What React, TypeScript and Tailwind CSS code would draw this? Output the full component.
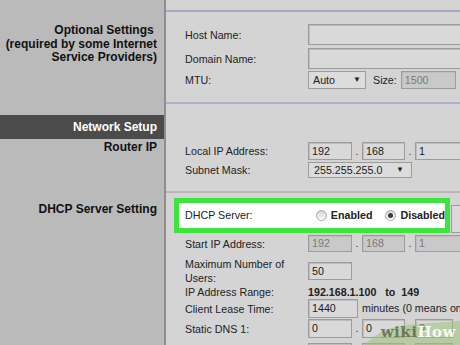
import React from 'react'

const font = { fontFamily: '"Liberation Sans", Arial, sans-serif' }

function Box({ w, h, v, dis, grow }: { w: number | string; h: number; v?: string; dis?: boolean; grow?: boolean }) {
  return (
    <div
      className={
        'flex items-center pl-[3px] border border-[#9c9c9c] shadow-[inset_1px_1px_0_#bdbdbd] ' +
        (dis ? 'bg-[#c9c9c9] text-[#7a7a7a] ' : 'bg-[#d9d9d9] text-[#1a1a1a] ') +
        (grow ? 'flex-1' : '')
      }
      style={{ width: grow ? undefined : w, height: h }}
    >
      {v}
    </div>
  )
}

function Dot() {
  return <span className="w-[10px] text-center text-[#444]">.</span>
}

function Radio({ on }: { on?: boolean }) {
  return (
    <span className="w-[11px] h-[11px] rounded-full border border-[#a8a8a8] bg-gradient-to-b from-[#d6d6d6] to-[#fbfbfb] flex items-center justify-center">
      {on && <span className="w-[5px] h-[5px] rounded-full bg-[#3a3a3a]" />}
    </span>
  )
}

function Row({ label, children, h, mt }: { label: React.ReactNode; children?: React.ReactNode; h: number; mt: number }) {
  return (
    <div className="flex items-center pl-[19px]" style={{ height: h, marginTop: mt }}>
      <div className="w-[123px] shrink-0 leading-[14px]">{label}</div>
      <div className="flex items-center flex-1 h-full">{children}</div>
    </div>
  )
}

export default function App() {
  return (
    <div className="relative w-[460px] h-[345px] overflow-hidden flex text-[10.7px] text-[#222]" style={font}>
      {/* sidebar */}
      <div className="w-[166px] shrink-0 bg-[#bababa] border-r-2 border-[#8e8e8e] font-bold text-[12px] text-right text-[#111]">
        <div className="pr-[7px] pt-[24px] leading-[13.5px]">
          <div>Optional Settings{'\u00a0'}</div>
          <div>(required by some Internet</div>
          <div>Service Providers)</div>
        </div>
        <div className="mt-[50px] h-[24px] bg-[#4b4b4b] text-white pr-[7px] flex items-center justify-end">
          Network Setup
        </div>
        <div className="pr-[7px] h-[16px] leading-[16px]">Router IP</div>
        <div className="pr-[7px] mt-[46px] leading-[16px]">DHCP Server Setting</div>
      </div>

      {/* content */}
      <div className="flex-1 bg-[#d4d4d4]">
        <div className="mt-[10px] h-[2px] bg-[#a9a6c6]" />
        <Row label="Host Name:" h={21} mt={12}>
          <Box w={0} h={21} grow />
        </Row>
        <Row label="Domain Name:" h={21} mt={3}>
          <Box w={0} h={21} grow />
        </Row>
        <Row label="MTU:" h={18} mt={2}>
          <div className="w-[58px] h-[18px] border border-[#9c9c9c] bg-[#dcdcdc] flex items-center justify-between px-[4px]">
            <span>Auto</span>
            <span className="text-[8px]">▼</span>
          </div>
          <span className="ml-[7px] mr-[4px]">Size:</span>
          <Box w={55} h={18} v="1500" dis />
        </Row>
        <div className="mt-[13px] h-[2px] bg-[#b2afc8]" />

        <Row label="Local IP Address:" h={18} mt={38}>
          <Box w={44} h={18} v="192" />
          <Dot />
          <Box w={43} h={18} v="168" />
          <Dot />
          <Box w={0} h={18} v="1" grow />
        </Row>
        <Row label="Subnet Mask:" h={16} mt={2}>
          <div className="w-[104px] h-[16px] border border-[#9c9c9c] bg-[#dcdcdc] flex items-center justify-between px-[5px]">
            <span>255.255.255.0</span>
            <span className="text-[8px] mr-[2px]">▼</span>
          </div>
        </Row>
        <div className="mt-[13px] h-[2px] bg-[#b8b8b8]" />

        <div className="flex items-center mt-[5px]">
          <div className="ml-[8px] w-[276px] h-[35px] border-[5px] border-[#3de43d] bg-white flex items-center pl-[6px]">
            <span className="w-[135px]">DHCP Server:</span>
            <Radio />
            <span className="ml-[4px] font-bold">Enabled</span>
            <span className="ml-[13px]"><Radio on /></span>
            <span className="ml-[4px] font-bold">Disabled</span>
          </div>
          <div className="ml-[1px] mt-[7px] w-[10px] h-[28px] border border-[#9c9c9c] bg-[#dadada]" />
        </div>

        <Row label="Start IP Address:" h={17} mt={2}>
          <Box w={44} h={17} v="192" dis />
          <Dot />
          <Box w={43} h={17} v="168" dis />
          <Dot />
          <Box w={0} h={17} v="1" dis grow />
        </Row>
        <Row label={<>Maximum Number of<br />Users:</>} h={30} mt={4}>
          <Box w={44} h={18} v="50" />
        </Row>
        <Row label="IP Address Range:" h={12} mt={0}>
          <span className="font-bold">192.168.1.100&nbsp;&nbsp;&nbsp;to&nbsp;&nbsp;149</span>
        </Row>
        <Row label="Client Lease Time:" h={19} mt={1}>
          <Box w={50} h={19} v="1440" />
          <span className="ml-[4px] whitespace-nowrap">minutes (0 means one day)</span>
        </Row>
        <Row label="Static DNS 1:" h={19} mt={1}>
          <Box w={44} h={19} v="0" />
          <Dot />
          <Box w={43} h={19} v="0" />
          <Dot />
          <Box w={38} h={19} v="0" />
        </Row>
        <Row label="Static DNS 2:" h={19} mt={5}>
          <Box w={44} h={19} v="0" />
          <Dot />
          <Box w={43} h={19} v="0" />
          <Dot />
          <Box w={38} h={19} v="0" />
        </Row>
      </div>

      {/* wikiHow watermark */}
      <svg className="absolute right-0 bottom-0" width="95" height="26" viewBox="0 0 95 26">
        <path d="M0 26 C 10 14, 25 7, 50 5 L 95 2 L 95 26 Z" fill="#9fc27a" fillOpacity="0.55" />
      </svg>
      <div
        className="absolute right-[4px] bottom-[5px] text-[15px] font-bold leading-none tracking-[0.5px]"
        style={{ fontFamily: '"DejaVu Serif", "Liberation Serif", serif' }}
      >
        <span className="text-[#5a6048]/80">wiki</span>
        <span className="text-white/90">How</span>
      </div>
    </div>
  )
}
